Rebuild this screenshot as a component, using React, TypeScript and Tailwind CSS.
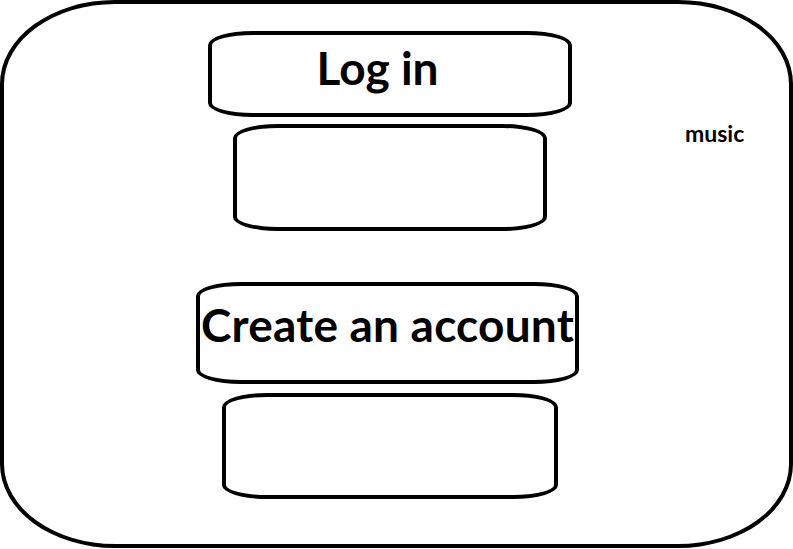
import React from "react";

export default function App() {
  const font = { fontFamily: "Lato, 'Noto Sans', sans-serif" };
  return (
    <div className="w-[793px] h-[549px] bg-white" style={font}>
      <div className="flex w-[793px] h-[548px] border-4 border-black rounded-[115px/84px] bg-white">
        <div className="flex flex-col items-start">
          <div className="ml-[204px] mt-[27px] w-[364px] h-[86px] border-4 border-black rounded-[45px/14px] flex justify-center items-start pt-[10px] pr-[25px]">
            <span className="text-[46px] leading-none font-bold text-black">Log in</span>
          </div>
          <div className="ml-[229px] mt-[7px] w-[314px] h-[107px] border-4 border-black rounded-[45px/14px]" />
          <div className="ml-[192px] mt-[51px] w-[383px] h-[102px] border-4 border-black rounded-[45px/14px] flex justify-center items-start pt-[16px]">
            <span className="text-[46px] leading-none font-bold text-black whitespace-nowrap tracking-[0.2px]">Create an account</span>
          </div>
          <div className="ml-[218px] mt-[9px] w-[336px] h-[106px] border-4 border-black rounded-[45px/14px]" />
        </div>
        <div className="ml-[106px] mt-[118px]">
          <span className="text-[23px] leading-none font-bold text-black">music</span>
        </div>
      </div>
    </div>
  );
}
